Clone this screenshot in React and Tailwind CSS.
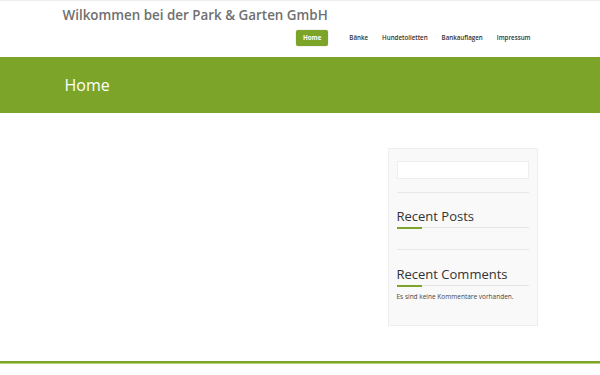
export default function App() {
  const nav = ['Bänke', 'Hundetoiletten', 'Bankauflagen', 'Impressum']
  return (
    <div className="min-h-[375px] bg-white flex flex-col antialiased" style={{ fontFamily: '"Open Sans", sans-serif' }}>
      {/* Header */}
      <header className="h-[57px] border-t border-[#eeeeee]">
        <div className="w-[475px] mx-auto">
          <div className="pt-[4px] text-[13.4px] leading-[20px] font-semibold text-[#707070] whitespace-nowrap">
            Wilkommen bei der Park &amp; Garten GmbH
          </div>
          <nav className="mt-[5px] flex justify-end items-center">
            <a className="h-[16px] px-[7px] flex items-center bg-[#7ba428] rounded-[2px] text-white text-[6.2px] font-bold shadow-[0_0_0_0.5px_#e5e5e5]">Home</a>
            <div className="flex ml-[14px]">
              {nav.map(n => (
                <a key={n} className="px-[7px] text-[6.2px] font-semibold text-[#333]">{n}</a>
              ))}
            </div>
          </nav>
        </div>
      </header>

      {/* Banner */}
      <div className="h-[56px] bg-[#7ba428] flex items-center">
        <div className="w-[475px] mx-auto pl-[2px]">
          <h1 className="text-[16px] font-normal text-white leading-none">Home</h1>
        </div>
      </div>

      {/* Content */}
      <main className="flex-1">
        <div className="w-[475px] mx-auto flex justify-end pt-[35px]">
          <aside className="w-[150px] h-[178px] bg-[#f9f9f9] border border-[#eeeeee] px-[8px] pt-[12px]">
            <div className="h-[18px] bg-white border border-[#eeeeee]" />
            <div className="mt-[13px] border-t border-[#e8e8e8]" />
            <h3 className="mt-[14px] text-[13px] leading-[18px] text-[#333]">Recent Posts</h3>
            <div className="mt-[2px] flex h-[2px]">
              <div className="w-[25px] bg-[#7ba428]" />
              <div className="flex-1 border-t border-[#e5e5e5]" />
            </div>
            <div className="mt-[20px] border-t border-[#e8e8e8]" />
            <h3 className="mt-[15px] text-[13px] leading-[18px] text-[#333]">Recent Comments</h3>
            <div className="mt-[2px] flex h-[2px]">
              <div className="w-[25px] bg-[#7ba428]" />
              <div className="flex-1 border-t border-[#e5e5e5]" />
            </div>
            <p className="mt-[5px] text-[6.5px] leading-[10px] text-[#444]">Es sind keine Kommentare vorhanden.</p>
          </aside>
        </div>
      </main>

      {/* Footer line */}
      <footer className="h-[14px]">
        <div className="h-[2px] bg-[#7ba428]" />
        <div className="h-[1px] bg-[#b5d17a]" />
      </footer>
    </div>
  )
}
